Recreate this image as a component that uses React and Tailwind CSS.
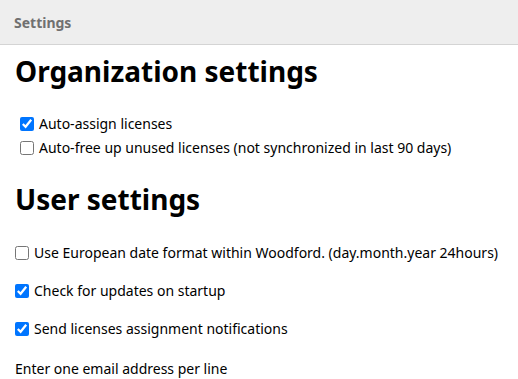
import React from 'react';

const font = { fontFamily: '"Noto Sans", "Open Sans", sans-serif' };

const Check = ({ checked, label, className = '' }) => (
    <label className={`flex items-center gap-[5px] text-[14px] leading-[20px] text-black ${className}`}>
        <input type="checkbox" defaultChecked={checked} className="w-[14px] h-[14px] m-0" />
        <span>{label}</span>
    </label>
);

export default function App() {
    return (
        <div className="w-[518px] h-[379px] bg-white overflow-hidden" style={font}>
            {/* Header */}
            <div className="h-[45px] bg-[#eeeeee] border-b border-[#d4d4d4] flex items-center px-[14px]">
                <span className="text-[14px] font-bold text-[#707070]">Settings</span>
            </div>

            <div className="px-[15px]">
                <h1 className="text-[28px] font-bold text-black leading-none mt-[12px] mb-[29px]">Organization settings</h1>
                <div className="pl-[5px] flex flex-col gap-[4px]">
                    <Check checked label="Auto-assign licenses" />
                    <Check label="Auto-free up unused licenses (not synchronized in last 90 days)" />
                </div>

                <h1 className="text-[28px] font-bold text-black leading-none mt-[27px] mb-[30px]">User settings</h1>
                <div className="flex flex-col gap-[18px]">
                    <Check label="Use European date format within Woodford. (day.month.year 24hours)" />
                    <Check checked label="Check for updates on startup" />
                    <Check checked label="Send licenses assignment notifications" />
                </div>
                <p className="text-[14px] leading-[20px] text-black mt-[20px]">Enter one email address per line</p>
            </div>
        </div>
    );
}
